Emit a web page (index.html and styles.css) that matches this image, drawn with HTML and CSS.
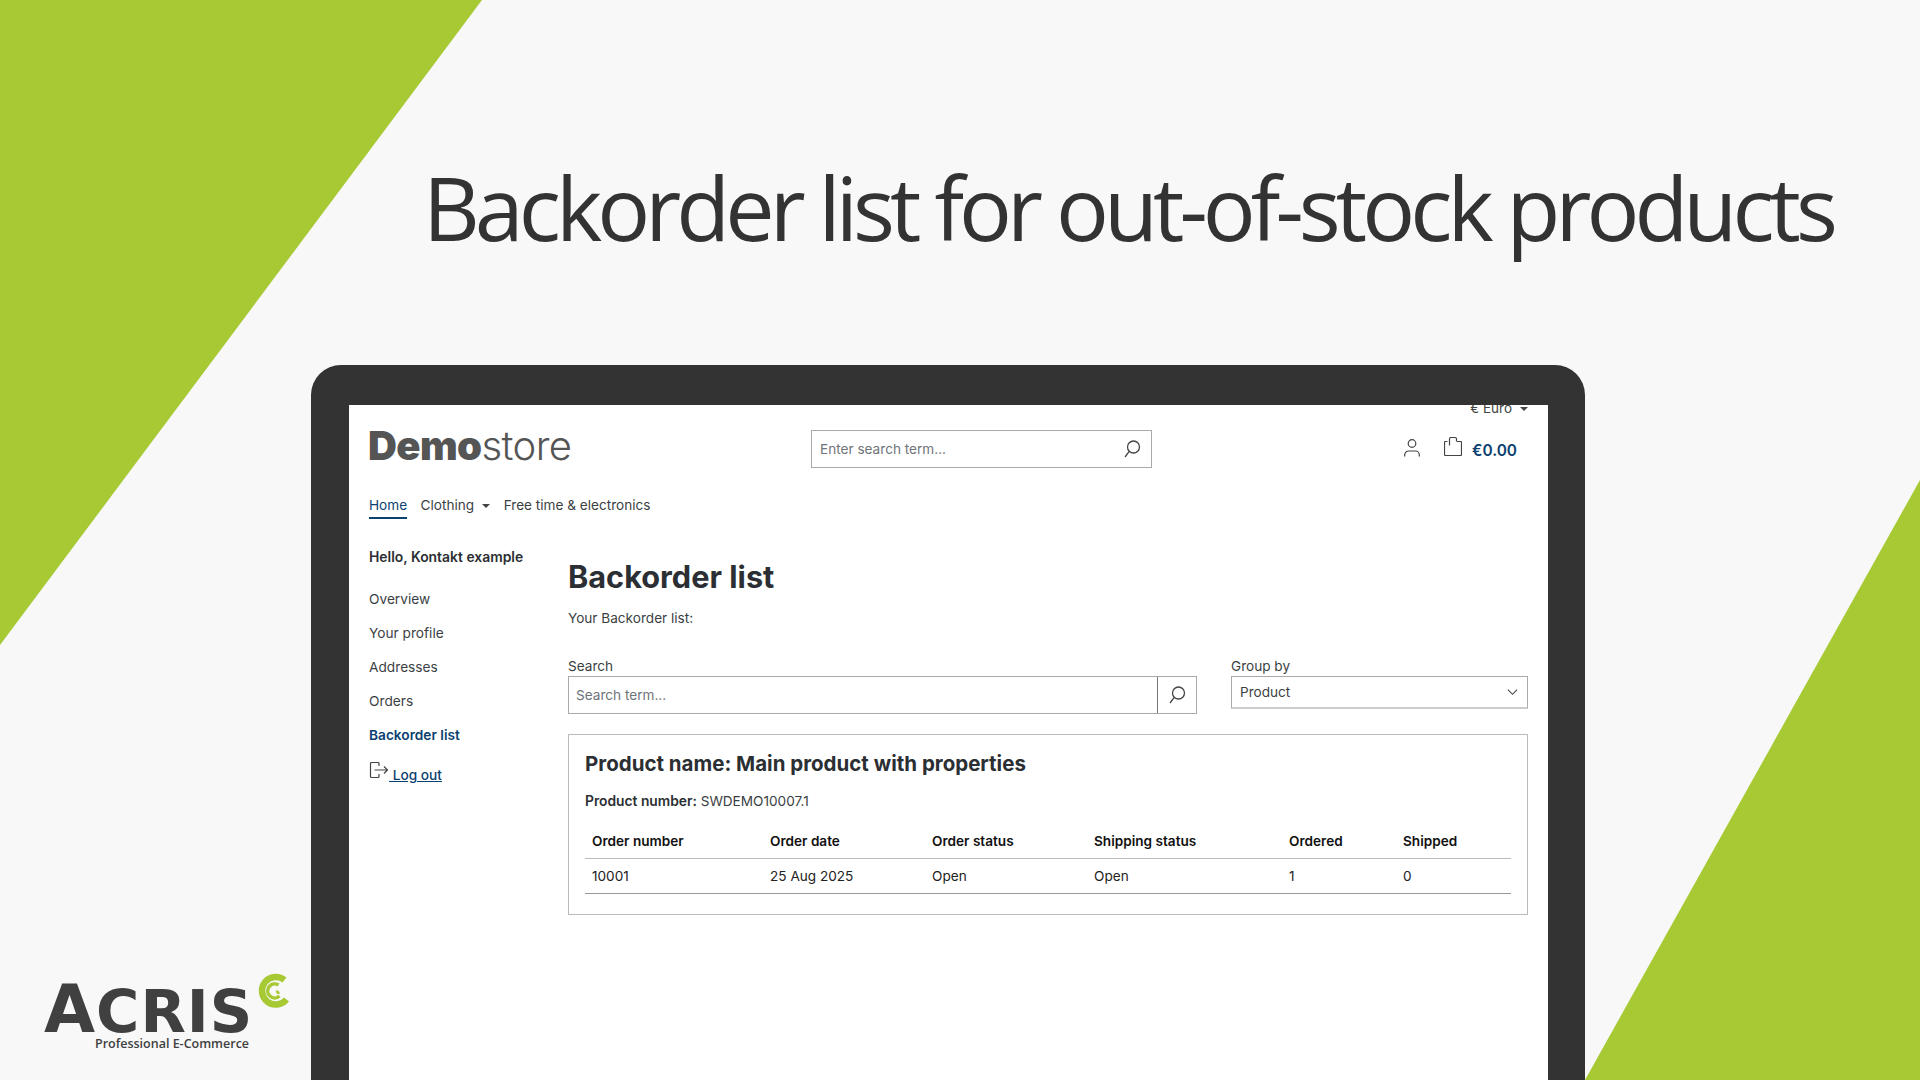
FILE: index.html
```html
<!DOCTYPE html>
<html lang="en">
<head>
<meta charset="utf-8">
<title>Backorder list for out-of-stock products</title>
<link rel="stylesheet" href="styles.css">
</head>
<body>
<div class="stage">
  <svg class="tri tri-left" viewBox="0 0 482 645"><polygon points="0,0 482,0 0,645"/></svg>
  <svg class="tri tri-right" viewBox="0 0 335 600"><polygon points="335,0 335,600 0,600"/></svg>
  <h1 class="headline">Backorder list for out-of-stock products</h1>
  <div class="laptop">
    <div class="screen">
      <div class="topbar"><span class="currency">€ Euro</span><span class="caret small"></span></div>
      <header class="header">
        <div class="logo"><b>Demo</b>store</div>
        <div class="site-search">
          <span class="ph">Enter search term...</span>
          <svg class="icon-search" viewBox="0 0 20 20"><circle cx="11.500" cy="8" r="6"/><path d="M7.200 12.300 3 18"/></svg>
        </div>
        <div class="actions">
          <svg class="icon-user" viewBox="0 0 16 18"><circle cx="8" cy="4.500" r="3.800"/><path d="M.7 17.500v-1.500a4 4 0 0 1 4-4h6.600a4 4 0 0 1 4 4v1.500"/></svg>
          <svg class="icon-bag" viewBox="0 0 18 19"><path d="M3.500 4.500H1.200a.7.7 0 0 0-.7.7V17.500a1 1 0 0 0 1 1h15a1 1 0 0 0 1-1V5.200a.7.7 0 0 0-.7-.7H13M5.500 8.500V2a1.500 1.500 0 0 1 1.500-1.500h4A1.500 1.500 0 0 1 12.500 2v2.500"/></svg>
          <span class="price">€0.00</span>
        </div>
      </header>
      <nav class="nav">
        <a class="nav-item active">Home</a>
        <a class="nav-item">Clothing<span class="caret"></span></a>
        <a class="nav-item">Free time &amp; electronics</a>
      </nav>
      <div class="content">
        <aside class="side">
          <div class="hello">Hello, Kontakt example</div>
          <a class="side-link">Overview</a>
          <a class="side-link">Your profile</a>
          <a class="side-link">Addresses</a>
          <a class="side-link">Orders</a>
          <a class="side-link current">Backorder list</a>
          <a class="logout">
            <svg class="icon-logout" viewBox="0 0 20 20"><path d="M10 5V2.500a1 1 0 0 0-1-1H2.500a1 1 0 0 0-1 1v13a1 1 0 0 0 1 1H9a1 1 0 0 0 1-1V13M5.500 9H18.500M15 5.500 18.500 9 15 12.500"/></svg>
            <span class="logout-text"> Log out</span>
          </a>
        </aside>
        <main class="main">
          <h2 class="title">Backorder list</h2>
          <p class="intro">Your Backorder list:</p>
          <div class="filters">
            <div class="f-search">
              <div class="label">Search</div>
              <div class="input-group">
                <div class="input"><span class="ph">Search term...</span></div>
                <div class="input-btn"><svg class="icon-search" viewBox="0 0 20 20"><circle cx="11.500" cy="8" r="6"/><path d="M7.200 12.300 3 18"/></svg></div>
              </div>
            </div>
            <div class="f-group">
              <div class="label">Group by</div>
              <div class="select"><span>Product</span><svg class="icon-chev" viewBox="0 0 12 8"><path d="M1 1.500 6 6.500 11 1.500"/></svg></div>
            </div>
          </div>
          <section class="card">
            <h3 class="card-title">Product name: Main product with properties</h3>
            <p class="pnum"><b>Product number:</b> SWDEMO10007.1</p>
            <table class="table">
              <thead>
                <tr><th class="c1">Order number</th><th class="c2">Order date</th><th class="c3">Order status</th><th class="c4">Shipping status</th><th class="c5">Ordered</th><th class="c6">Shipped</th></tr>
              </thead>
              <tbody>
                <tr><td>10001</td><td>25 Aug 2025</td><td>Open</td><td>Open</td><td>1</td><td>0</td></tr>
              </tbody>
            </table>
          </section>
        </main>
      </div>
    </div>
  </div>
  <div class="brand">
    <svg class="brand-mark" viewBox="0 0 36 38"><path class="m1" d="M29.500 9A13.800 13.800 0 1 0 31.500 28.500"/><path class="m2" d="M23.500 14A7 7 0 1 0 24.500 25"/><path class="m3" d="M22 19.500A2.500 2.500 0 0 0 24.500 22"/></svg>
    <div class="brand-word"><span class="big">A</span>CRIS</div>
    <div class="brand-sub">Professional E-Commerce</div>
  </div>
</div>
</body>
</html>
```
FILE: styles.css
```css
* { box-sizing: border-box; }
html, body { margin: 0; padding: 0; }
body { width: 1920px; height: 1080px; overflow: hidden; background: #f8f8f8; font-family: Inter, "Liberation Sans", sans-serif; font-size: 13.700px; color: #333; }
.stage { position: relative; width: 1920px; height: 1080px; overflow: hidden; display: flex; flex-direction: column; }
.tri { position: absolute; fill: #a6c934; }
.tri-left { left: 0; top: 0; width: 482px; height: 645px; }
.tri-right { right: 0; bottom: 0; width: 335px; height: 600px; }
.headline { position: relative; margin: 151px 87px 0 0; height: 214px; font-family: "Open Sans", sans-serif; font-weight: 400; font-size: 88px; line-height: 112px; letter-spacing: -4.950px; color: #333; text-align: right; white-space: nowrap; }
.laptop { position: relative; margin-left: 311px; width: 1274px; flex: 1; background: #333; border-radius: 30px 30px 0 0; padding: 40px 37px 0 38px; display: flex; }
.screen { flex: 1; background: #fff; padding: 0 20px; overflow: hidden; }
.topbar { margin-top: -7px; height: 20px; line-height: 20px; text-align: right; font-size: 13.500px; color: #444; }
.caret { display: inline-block; margin-left: 7px; vertical-align: 2px; border-top: 4px solid #444; border-left: 4px solid transparent; border-right: 4px solid transparent; }
.caret.small { margin-left: 8px; }
.header { display: grid; grid-template-columns: 442px 341px 1fr; height: 38px; margin-top: 12px; align-items: center; }
.logo { font-size: 40px; line-height: 38px; color: #555; font-weight: 300; letter-spacing: -0.600px; margin: -7px 0 0 -1px; }
.logo b { font-weight: 900; }
.site-search { height: 38px; border: 1px solid #aaa; display: flex; align-items: center; justify-content: space-between; padding: 0 9px 1px 8px; }
.ph { color: #6f7479; font-size: 13.600px; }
.icon-search { width: 20px; height: 20px; fill: none; stroke: #444; stroke-width: 1.300; }
.actions { display: flex; align-items: center; justify-content: flex-end; padding-right: 11px; }
.icon-user { width: 16px; height: 18px; margin-top: -3px; fill: none; stroke: #444; stroke-width: 1.200; }
.icon-bag { width: 18px; height: 19px; margin: -5px 0 0 24px; fill: none; stroke: #444; stroke-width: 1.200; }
.price { margin-left: 10px; font-size: 15.400px; line-height: 20px; font-weight: 600; color: #0b3f70; padding-top: 3px; }
.nav { display: flex; gap: 13.500px; margin-top: 25px; height: 26px; }
.nav-item { height: 26px; line-height: 24px; color: #3b3f43; font-size: 13.600px; }
.nav-item .caret { margin-left: 8px; }
.nav-item.active { color: #0b3f70; border-bottom: 2px solid #0b3f70; }
.content { display: grid; grid-template-columns: 199px 1fr; }
.side { padding-top: 28px; }
.hello { font-size: 13.900px; font-weight: 600; line-height: 20px; color: #2b2f33; margin-bottom: 15px; }
.side-link { display: block; height: 34px; line-height: 20px; padding-top: 7px; color: #3b3f43; }
.side-link.current { font-weight: 600; color: #0b3f70; }
.logout { display: flex; align-items: flex-start; margin-top: 8px; color: #0b3f70; font-weight: 500; }
.icon-logout { width: 20px; height: 20px; margin-top: 1px; fill: none; stroke: #444; stroke-width: 1.200; }
.logout-text { margin-top: 5px; line-height: 20px; text-decoration: underline; white-space: pre; }
.main { padding-top: 40px; }
.title { margin: 0; font-size: 30.700px; line-height: 36px; font-weight: 700; color: #2b2f33; }
.intro { margin: 13px 0 0; line-height: 20px; color: #3b3f43; font-size: 13.600px; }
.filters { display: grid; grid-template-columns: 629px 297px; column-gap: 34px; margin-top: 28px; }
.label { line-height: 20px; color: #3b3f43; font-size: 13.600px; }
.input-group { display: flex; height: 38px; border: 1px solid #aaa; }
.input { flex: 1; display: flex; align-items: center; padding: 0 0 1px 7px; }
.input-btn { width: 39px; border-left: 1px solid #777; display: flex; align-items: center; justify-content: center; }
.select { height: 33px; border: 1px solid #aaa; border-bottom: 2px solid #ccc; display: flex; align-items: center; justify-content: space-between; padding: 0 9px 0 8px; color: #3b3f43; font-size: 13.600px; }
.icon-chev { width: 11px; height: 8px; fill: none; stroke: #444; stroke-width: 1.200; }
.card { margin-top: 20px; height: 181px; border: 1px solid #bbb; padding: 15px 16px 0; }
.card-title { margin: 0; font-size: 20.500px; line-height: 28px; font-weight: 700; color: #2b2f33; }
.pnum { margin: 13px 0 0; line-height: 20px; color: #3b3f43; font-size: 13.600px; }
.pnum b { font-size: 13.800px; font-weight: 600; color: #2b2f33; }
.table { margin-top: 13px; width: 100%; border-collapse: collapse; table-layout: fixed; color: #222; font-size: 13.600px; }
.table th { height: 34px; padding: 0 7px; text-align: left; font-weight: 600; color: #111; border-bottom: 1px solid #bbb; }
.table td { height: 35px; padding: 0 7px; border-bottom: 1px solid #999; }
.c1 { width: 178px; } .c2 { width: 162px; } .c3 { width: 162px; } .c4 { width: 195px; } .c5 { width: 114px; }
.brand { position: absolute; left: 44px; top: 972px; width: 250px; height: 100px; }
.brand-mark { position: absolute; left: 211px; top: -1px; width: 36px; height: 38px; fill: none; stroke: #a6c934; }
.m1 { stroke-width: 6.500; } .m2 { stroke-width: 3.500; } .m3 { stroke-width: 2.500; }
.brand-word { position: absolute; left: 0; top: 15px; font-family: "DejaVu Sans", sans-serif; font-weight: 700; font-size: 59px; line-height: 46px; color: #404040; letter-spacing: 1px; white-space: nowrap; }
.brand-word .big { font-size: 66px; }
.brand-sub { position: absolute; left: 51px; top: 63px; font-family: "Open Sans", sans-serif; font-weight: 600; font-size: 12.500px; line-height: 18px; color: #404040; white-space: nowrap; }
```
